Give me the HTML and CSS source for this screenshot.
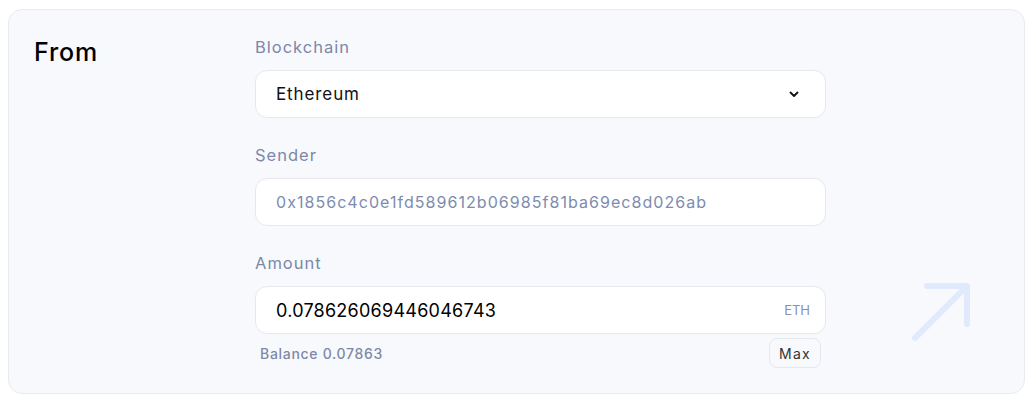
FILE: index.html
```html
<!DOCTYPE html>
<html>
<head>
<meta charset="utf-8">
<link rel="stylesheet" href="styles.css">
</head>
<body>
<section class="card">
  <h2 class="title">From</h2>
  <div class="form">
    <div class="field">
      <div class="label">Blockchain</div>
      <div class="box select">
        <span class="value">Ethereum</span>
        <svg class="chev" width="14" height="14" viewBox="0 0 14 14"><path d="M3.5 5.5 L7 9 L10.5 5.5" fill="none" stroke="#111" stroke-width="1.8" stroke-linecap="round" stroke-linejoin="round"/></svg>
      </div>
    </div>
    <div class="field">
      <div class="label">Sender</div>
      <div class="box">
        <span class="muted">0x1856c4c0e1fd589612b06985f81ba69ec8d026ab</span>
      </div>
    </div>
    <div class="field">
      <div class="label">Amount</div>
      <div class="box">
        <span class="amount">0.078626069446046743</span>
        <span class="unit">ETH</span>
      </div>
      <div class="balance-row">
        <span class="balance">Balance 0.07863</span>
        <button class="max">Max</button>
      </div>
    </div>
  </div>
  <svg class="arrow" width="70" height="70" viewBox="0 0 70 70"><path d="M8 60 L60 8 M20 8 L60 8 L60 46" fill="none" stroke="#e1e9fd" stroke-width="6" stroke-linecap="round" stroke-linejoin="round"/></svg>
</section>
</body>
</html>
```
FILE: styles.css
```css
* { box-sizing: border-box; }
html, body { margin: 0; padding: 0; background: #ffffff; }
body { padding: 9px 9px 0 8px; font-family: Inter, "Open Sans", sans-serif; }
.card {
  position: relative;
  background: #f8f9fc;
  border: 1px solid #e9ebf1;
  border-radius: 14px;
  height: 385px;
  display: flex;
  padding: 25px 0 0 25px;
}
.title {
  margin: 0;
  width: 221px;
  font-size: 25px;
  line-height: 32px;
  font-weight: 500;
  letter-spacing: 0.9px;
  color: #000;
  padding-top: 1px;
}
.form {
  width: 571px;
  display: flex;
  flex-direction: column;
  gap: 25px;
}
.field { display: flex; flex-direction: column; gap: 11px; }
.label {
  font-size: 16.5px;
  line-height: 24px;
  color: #7b88a8;
  letter-spacing: 1px;
}
.box {
  height: 48px;
  background: #fff;
  border: 1px solid #e6e8ef;
  border-radius: 12px;
  display: flex;
  align-items: center;
  padding: 0 15px 0 20px;
}
.select { justify-content: space-between; padding-right: 24px; }
.value { font-size: 17px; color: #111; letter-spacing: 0.9px; }
.muted { font-size: 16px; color: #7d8cae; letter-spacing: 1.05px; }
.amount { font-size: 18px; color: #000; flex: 1; letter-spacing: 0.25px; }
.unit { font-size: 13px; color: #8591ae; }
.balance-row {
  margin-top: -7px;
  display: flex;
  justify-content: space-between;
  align-items: center;
  padding: 0 5px;
}
.balance { font-size: 14px; color: #7d89a7; letter-spacing: 0.7px; font-weight: 500; }
.max {
  font-family: inherit;
  font-size: 14px;
  letter-spacing: 1.2px;
  color: #333;
  background: #f8f9fc;
  border: 1px solid #e6e8ef;
  border-radius: 8px;
  width: 52px;
  height: 30px;
  padding: 0;
}
.arrow { position: absolute; right: 47px; bottom: 45px; }
```
